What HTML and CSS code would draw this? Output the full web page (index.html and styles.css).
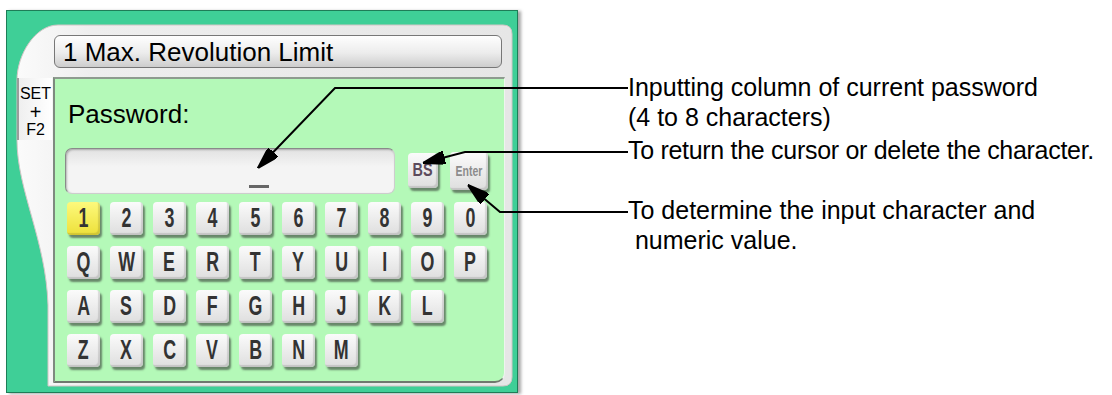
FILE: index.html
```html
<!DOCTYPE html>
<html lang="en">
<head>
  <meta charset="UTF-8" />
  <title>Password Input</title>
  <link rel="stylesheet" href="styles.css">
</head>
<body>

<div class="page">
  <div class="panel">
    <svg class="frame" width="512" height="383" viewBox="0 0 512 383">
      <defs>
        <linearGradient id="frame-fill" x1="0" y1="0" x2="1" y2="0">
          <stop offset="0" stop-color="#fbfbfb" />
          <stop offset="0.15" stop-color="#eeeeee" />
          <stop offset="1" stop-color="#e6e6e6" />
        </linearGradient>
      </defs>
      <path d="M52 15 H497 Q506 15 506 24 V367 Q506 376 497 376 H42 V295 C40 230 11 180 11 130 V70 C11 45 29 15 52 15 Z"
            fill="url(#frame-fill)" stroke="#d2c6c6" stroke-width="1" />
    </svg>

    <div class="title">1 Max. Revolution Limit</div>

    <div class="body-row">
      <div class="tab">
        <span class="tab-set">SET</span>
        <span class="plus">+</span>
        <span class="tab-f2">F2</span>
      </div>

      <div class="screen">
        <div class="label">Password:</div>

        <div class="entry-row">
          <div class="entry"><span class="cursor"></span></div>
          <div class="key key-bs"><span>BS</span></div>
          <div class="key key-enter"><span>Enter</span></div>
        </div>

        <div class="keys">
          <div class="key-row">
            <div class="key on"><span>1</span></div>
            <div class="key"><span>2</span></div>
            <div class="key"><span>3</span></div>
            <div class="key"><span>4</span></div>
            <div class="key"><span>5</span></div>
            <div class="key"><span>6</span></div>
            <div class="key"><span>7</span></div>
            <div class="key"><span>8</span></div>
            <div class="key"><span>9</span></div>
            <div class="key"><span>0</span></div>
          </div>
          <div class="key-row">
            <div class="key"><span>Q</span></div>
            <div class="key"><span>W</span></div>
            <div class="key"><span>E</span></div>
            <div class="key"><span>R</span></div>
            <div class="key"><span>T</span></div>
            <div class="key"><span>Y</span></div>
            <div class="key"><span>U</span></div>
            <div class="key"><span>I</span></div>
            <div class="key"><span>O</span></div>
            <div class="key"><span>P</span></div>
          </div>
          <div class="key-row">
            <div class="key"><span>A</span></div>
            <div class="key"><span>S</span></div>
            <div class="key"><span>D</span></div>
            <div class="key"><span>F</span></div>
            <div class="key"><span>G</span></div>
            <div class="key"><span>H</span></div>
            <div class="key"><span>J</span></div>
            <div class="key"><span>K</span></div>
            <div class="key"><span>L</span></div>
          </div>
          <div class="key-row">
            <div class="key"><span>Z</span></div>
            <div class="key"><span>X</span></div>
            <div class="key"><span>C</span></div>
            <div class="key"><span>V</span></div>
            <div class="key"><span>B</span></div>
            <div class="key"><span>N</span></div>
            <div class="key"><span>M</span></div>
          </div>
        </div>
      </div>
    </div>
  </div>

  <div class="notes">
    <p class="note note-first">Inputting column of current password<br>(4 to 8 characters)</p>
    <p class="note note-second">To return the cursor or delete the character.</p>
    <p class="note note-third">To determine the input character and<br>&nbsp;numeric value.</p>
  </div>

  <svg class="leaders" width="1112" height="395" viewBox="0 0 1112 395">
    <defs>
      <marker id="head" markerUnits="userSpaceOnUse" markerWidth="22" markerHeight="13"
              viewBox="0 0 22 13" refX="22" refY="6.5" orient="auto">
        <path d="M0 0 L22 6.5 L0 13 Z" fill="#000" />
      </marker>
    </defs>
    <path d="M628 88 H335 L258 168" marker-end="url(#head)" />
    <path d="M628 152 H465 L423 163" marker-end="url(#head)" />
    <path d="M628 212 H500 L468 185" marker-end="url(#head)" />
  </svg>
</div>

</body>
</html>
```

FILE: styles.css
```css
body {
  margin: 0;
  background-color: #fff;
  font-family: "Liberation Sans", Arial, sans-serif;
  color: #000;
}

.page {
  position: relative;
  display: flex;
  width: 1112px;
  height: 395px;
  overflow: hidden;
}

/* green machine panel */
.panel {
  position: relative;
  flex: none;
  box-sizing: border-box;
  width: 512px;
  height: 383px;
  margin: 10px 0 0 6px;
  padding: 24px 0 0 10px;
  background-color: #3fcf97;
  border: 1px solid #1e7d57;
  box-shadow: 3px 1px 3px rgba(0,0,0,0.35);
}

.frame {
  position: absolute;
  left: -1px;
  top: -1px;
}

.title {
  position: relative;
  box-sizing: border-box;
  width: 448px;
  height: 33px;
  margin-left: 37px;
  padding: 0 0 0 8px;
  border: 1px solid #777;
  border-radius: 6px;
  background: linear-gradient(#fefefe, #ececec 55%, #cdcdcd);
  font-size: 26px;
  line-height: 32px;
}

.body-row {
  position: relative;
  display: flex;
  margin-top: 9px;
}

.tab {
  box-sizing: border-box;
  width: 35px;
  height: 62px;
  margin-top: 1px;
  padding-top: 7px;
  border-left: 2px solid #9c9c9c;
  background: linear-gradient(90deg, #efefef, #fff);
  display: flex;
  flex-direction: column;
  align-items: center;
  font-size: 16px;
}

.tab-set,
.tab-f2 {
  line-height: 18px;
}

.tab .plus {
  font-size: 20px;
  line-height: 18px;
}

.screen {
  box-sizing: border-box;
  width: 452px;
  height: 306px;
  margin-left: 1px;
  background-color: #b4f9b8;
  border-style: solid;
  border-width: 2px 1px 2px 2px;
  border-color: #8e9b8f #eef4ee #6f796f #7e8a7f;
  border-radius: 0 0 10px 0;
}

.label {
  height: 30px;
  margin: 20px 0 0 13px;
  font-size: 26px;
  line-height: 30px;
}

.entry-row {
  display: flex;
  align-items: flex-start;
  margin: 19px 0 0 10px;
}

.entry {
  position: relative;
  box-sizing: border-box;
  width: 330px;
  height: 46px;
  border: 1px solid;
  border-color: #8a8a8a #cdcdcd #cdcdcd #8a8a8a;
  border-radius: 7px;
  background: linear-gradient(#e2e2e2, #f4f4f4 40%, #f4f4f4);
  box-shadow: inset 1px 1px 2px rgba(0,0,0,0.25);
}

.cursor {
  position: absolute;
  left: 183px;
  bottom: 5px;
  width: 20px;
  height: 3px;
  background-color: #666;
}

/* keyboard keys */
.keys {
  display: flex;
  flex-direction: column;
  gap: 11px;
  margin: 8px 0 0 12px;
}

.key-row {
  display: flex;
  gap: 10px;
}

.key {
  box-sizing: border-box;
  width: 33px;
  height: 33px;
  border-radius: 4px;
  background: linear-gradient(#fbfbfb, #dedede);
  box-shadow: 2px 3px 2px rgba(40,40,40,0.55), inset -2px -2px 1px rgba(0,0,0,0.12);
  display: flex;
  align-items: center;
  justify-content: center;
  font-weight: bold;
  font-size: 27px;
  color: #333;
}

.key span {
  display: inline-block;
  transform: scaleX(0.66);
}

.key.on {
  background: linear-gradient(#fdf97c, #ede03a);
}

.key-bs {
  width: 30px;
  height: 35px;
  margin: 5px 0 0 13px;
  font-size: 18px;
  color: #5c4b5c;
}

.key-bs span {
  transform: scaleX(0.8);
}

.key-enter {
  width: 38px;
  height: 38px;
  margin: 4px 0 0 12px;
  font-size: 14px;
  color: #8c8c8c;
}

.key-enter span {
  transform: scaleX(0.75);
}

/* callout texts */
.notes {
  margin: 72px 0 0 110px;
  font-size: 25px;
  line-height: 30px;
  white-space: nowrap;
}

.note {
  margin: 0;
}

.note-second {
  margin-top: 3px;
  letter-spacing: -0.3px;
}

.note-third {
  margin-top: 30px;
}

.leaders {
  position: absolute;
  left: 0;
  top: 0;
  pointer-events: none;
  fill: none;
  stroke: #000;
  stroke-width: 2;
}
```
